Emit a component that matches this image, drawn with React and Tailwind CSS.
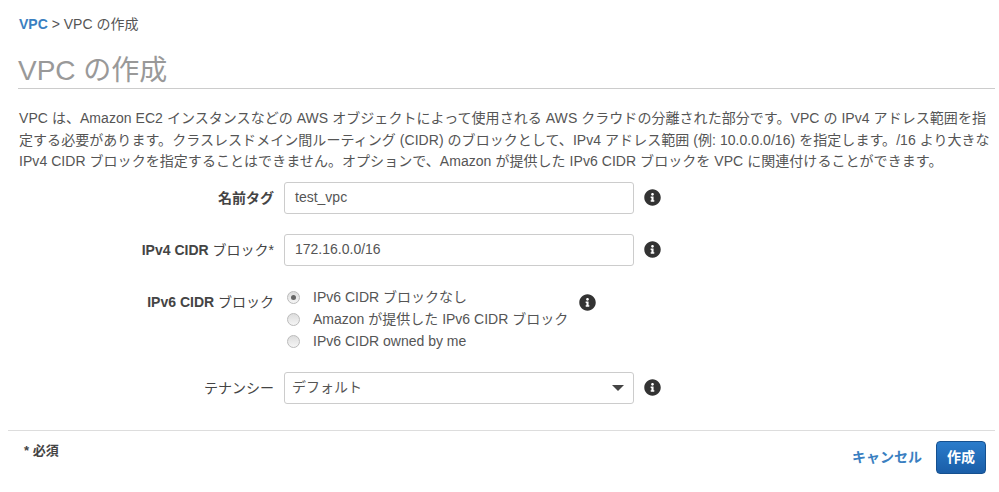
import { FaInfoCircle } from 'react-icons/fa'

function Info({ className = '' }) {
  return <FaInfoCircle className={`w-[17px] h-[17px] text-[#333] ${className}`} />
}

function Label({ children }) {
  return <div className="w-[266px] text-right text-[14px] font-bold text-[#444] leading-5 shrink-0">{children}</div>
}

function Radio({ checked, label }) {
  return (
    <div className="flex items-center h-[22px]">
      <span className="w-[13px] h-[13px] rounded-full border border-[#bbb] bg-gradient-to-b from-[#ddd] to-[#f5f5f5] flex items-center justify-center shrink-0">
        {checked && <span className="w-[5px] h-[5px] rounded-full bg-[#666]" />}
      </span>
      <span className="ml-[13px] text-[14px] text-[#555] whitespace-nowrap">{label}</span>
    </div>
  )
}

export default function App() {
  return (
    <div className="w-[999px] h-[492px] bg-white overflow-hidden font-['Liberation_Sans','Noto_Sans_CJK_JP',sans-serif] text-[#444]">
      <div className="pl-[19px] pt-[15px] text-[14px] leading-[18px] text-[#555]">
        <span className="font-bold text-[#3a7fc1]">VPC</span> &gt; VPC の作成
      </div>

      <div className="ml-[18px] mr-[4px] mt-[21px] h-[35px] border-b border-[#ccc] text-[28px] leading-[34px] text-[#999]">
        VPC の作成
      </div>

      <p className="ml-[19px] mt-[19px] w-[980px] text-[14px] leading-[21.5px] tracking-[0.05px] text-[#555] whitespace-nowrap">
        VPC は、Amazon EC2 インスタンスなどの AWS オブジェクトによって使用される AWS クラウドの分離された部分です。VPC の IPv4 アドレス範囲を指<br />
        定する必要があります。クラスレスドメイン間ルーティング (CIDR) のブロックとして、IPv4 アドレス範囲 (例: 10.0.0.0/16) を指定します。/16 より大きな<br />
        IPv4 CIDR ブロックを指定することはできません。オプションで、Amazon が提供した IPv6 CIDR ブロックを VPC に関連付けることができます。
      </p>

      <div className="pl-[8px] mt-[9px] flex flex-col">
        <div className="flex items-center h-[32px]">
          <Label>名前タグ</Label>
          <div className="ml-[10px] w-[350px] h-[32px] border border-[#ccc] rounded-[3px] px-[10px] flex items-center text-[14px] text-[#555]">test_vpc</div>
          <Info className="ml-[10px]" />
        </div>

        <div className="flex items-center h-[32px] mt-[20px]">
          <Label>IPv4 CIDR <span className="font-normal">ブロック*</span></Label>
          <div className="ml-[10px] w-[350px] h-[32px] border border-[#ccc] rounded-[3px] px-[10px] flex items-center text-[14px] text-[#555]">172.16.0.0/16</div>
          <Info className="ml-[10px]" />
        </div>

        <div className="flex mt-[20px]">
          <div className="pt-[6px]"><Label>IPv6 CIDR <span className="font-normal">ブロック</span></Label></div>
          <div className="ml-[13px] pt-[1px] flex flex-col">
            <Radio checked label="IPv6 CIDR ブロックなし" />
            <Radio label="Amazon が提供した IPv6 CIDR ブロック" />
            <Radio label="IPv6 CIDR owned by me" />
          </div>
          <Info className="ml-[11px] mt-[8px]" />
        </div>

        <div className="flex items-center h-[32px] mt-[19px]">
          <Label><span className="font-normal">テナンシー</span></Label>
          <div className="ml-[10px] w-[350px] h-[32px] border border-[#ccc] rounded-[3px] pl-[7px] pr-[9px] flex items-center justify-between text-[14px] text-[#555]">
            デフォルト
            <span className="w-0 h-0 border-x-[6px] border-x-transparent border-t-[6px] border-t-[#444]" />
          </div>
          <Info className="ml-[10px]" />
        </div>
      </div>

      <div className="ml-[8px] mr-[4px] mt-[26px] border-t border-[#ddd] flex justify-between">
        <div className="pl-[16px] pt-[10px] text-[13px] font-bold text-[#444]">* 必須</div>
        <div className="flex items-center pt-[10px] pr-[9px]">
          <span className="text-[14px] font-bold text-[#3a7fc1]">キャンセル</span>
          <button className="ml-[14px] w-[50px] h-[33px] rounded-[4px] border border-[#15508f] bg-gradient-to-b from-[#2b7ccb] to-[#1a5ea8] text-white text-[14px] font-bold">作成</button>
        </div>
      </div>
    </div>
  )
}
